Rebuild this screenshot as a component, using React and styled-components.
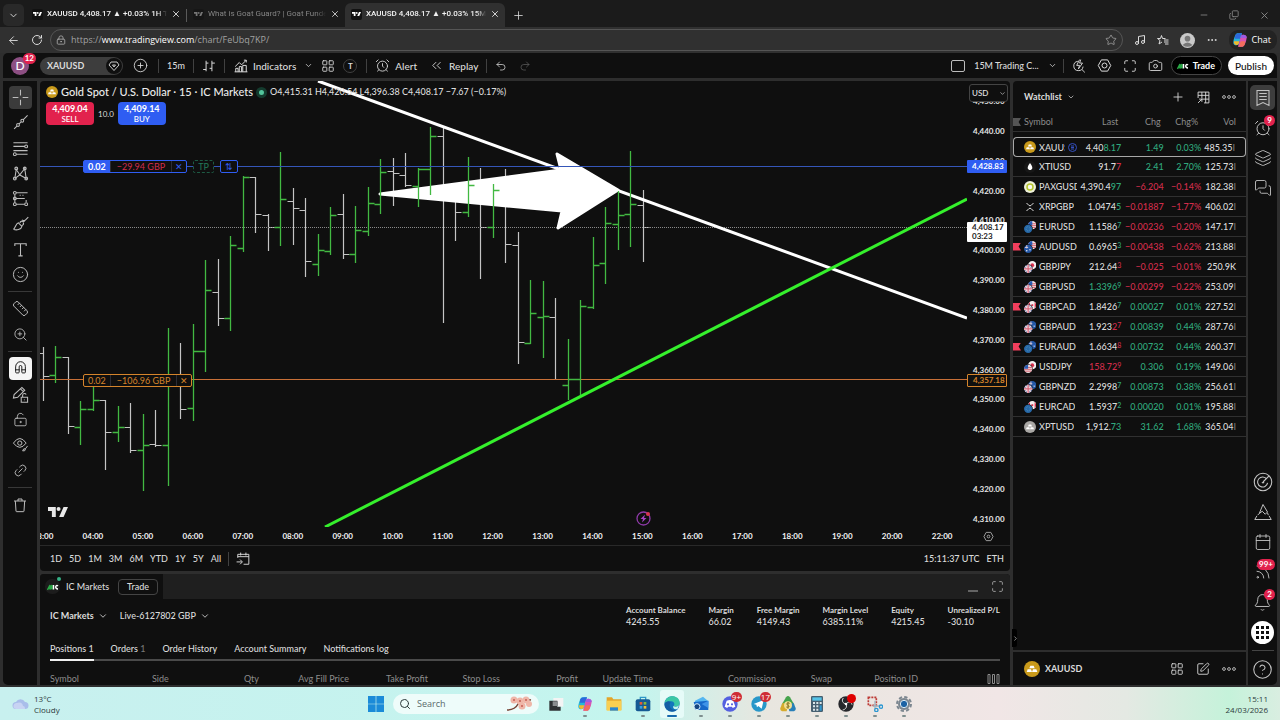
import styled, { createGlobalStyle, css } from "styled-components";
import {
  AlarmClock, ArrowLeft, Bell, Calendar, Camera, ChevronDown, ChevronRight, ChevronsLeft, CircleHelp, CirclePlus,
  Copy, Ellipsis, Eye, Layers, LayoutGrid, Link2, LockKeyholeOpen, LockKeyhole, Magnet, Maximize, MessagesSquare,
  Minus, Music, Plus, Redo2, RotateCw, Rss, Ruler, Search, Smile, SquarePen, Star, Trash2, Undo2, X, ZoomIn,
} from "lucide-react";

const UI = `"Lato", "Open Sans", sans-serif`;
const SYSTEM = `"Open Sans", "Noto Sans", sans-serif`;

const c = {
  bg: "#0f0f0f",
  frame: "#2e2e2e",
  text: "#dbdbdb",
  dim: "#8c8c8c",
  up: "#2fa87c",
  down: "#d12d4b",
  blue: "#2f5df2",
  orange: "#d5842b",
  red: "#e2224d",
};

const GlobalStyle = createGlobalStyle`
  * { box-sizing: border-box; }
  body { margin: 0; background: ${c.frame}; overflow: hidden; }
  button, input, select {
    font: inherit;
    color: inherit;
    background: none;
    border: 0;
    padding: 0;
    margin: 0;
    outline: 0;
  }
  button { cursor: pointer; white-space: nowrap; }
  svg { display: block; flex-shrink: 0; }
`;

const Page = styled.div`
  display: flex;
  flex-direction: column;
  height: 100vh;
  font-family: ${UI};
  font-size: 10px;
  line-height: 12px;
  color: ${c.text};
`;

const row = css`
  display: flex;
  align-items: center;
`;

/* browser chrome */

const TabBar = styled.div`
  ${row};
  flex: 0 0 27px;
  padding: 3px 10px 0 3px;
  background: #1b1b1b;
  font: 8px/12px "Roboto", ${SYSTEM};
`;

const TabMenu = styled.button`
  ${row};
  justify-content: center;
  width: 21px;
  height: 22px;
  margin-right: 2px;
  border-radius: 5px;
  background: #292929;
`;

const BrowserTab = styled.div`
  ${row};
  width: ${(p) => p.$width}px;
  height: 24px;
  padding: 0 5px 2px 6px;
  gap: 4px;
  border-radius: 6px 6px 0 0;
  color: ${(p) => (p.$muted ? "#858585" : "#f2f2f2")};
  background: ${(p) => (p.$active ? "#303030" : "transparent")};
  font-weight: ${(p) => (p.$muted ? 400 : 500)};
`;

const TabDivider = styled.span`
  width: 1px;
  height: 13px;
  background: #5a5a5a;
`;

const TabTitle = styled.span`
  flex: 1;
  min-width: 0;
  overflow: hidden;
  white-space: nowrap;
  mask-image: linear-gradient(to right, #000 92%, transparent);
`;

const NewTab = styled.button`
  margin: 0 auto 0 7px;
`;

const WindowControls = styled.div`
  display: flex;
  gap: 20px;
  color: #8a8a8a;
`;

const RestoreIcon = styled(Copy)`
  transform: scaleY(-1);
`;

const AddressRow = styled.div`
  ${row};
  flex: 0 0 26px;
  padding: 0 3px 0 7px;
  gap: 11px;
  background: #303030;
  font: 9px/12px ${SYSTEM};
`;

const AddressBox = styled.div`
  ${row};
  flex: 1;
  height: 22px;
  margin-left: -4px;
  padding: 0 5px;
  gap: 5px;
  border: 1px solid #555;
  border-radius: 11px;
  color: #aaa;
`;

const Url = styled.a`
  flex: 1;
  color: #a2a2a2;
  text-decoration: none;

  b { font-weight: 500; color: #fff; }
`;

const ChatButton = styled.button`
  ${row};
  gap: 4px;
  height: 20px;
  padding: 0 6px 0 3px;
  border-radius: 9px;
  background: #232323;
  color: #fff;
`;

/* application frame */

const Frame = styled.div`
  flex: 1;
  min-height: 0;
  display: flex;
  flex-direction: column;
  gap: 3px;
  padding: 0 3px 2px;
  background: ${c.frame};
`;

const Toolbar = styled.header`
  ${row};
  flex: 0 0 25px;
  padding: 0 3px 0 8px;
  border-radius: 5px 5px 0 0;
  background: ${c.bg};
  font-weight: 500;
`;

const ToolGroup = styled.div`
  ${row};
  gap: ${(p) => p.$gap || 8}px;
  padding: 0 ${(p) => p.$pad || 0}px;
`;

const Divider = styled.span`
  width: 1px;
  height: 14px;
  background: #414141;
`;

const Spacer = styled.span`
  flex: 1;
`;

const ToolButton = styled.button`
  ${row};
  gap: 5px;
  color: ${(p) => (p.$off ? "#5c5c5c" : c.text)};
  font-size: ${(p) => (p.$small ? 9 : 10)}px;
`;

const Avatar = styled.div`
  position: relative;
  width: 18px;
  height: 18px;
  margin-right: 11px;
  border-radius: 9px;
  background: #8d4f83;
  color: #fff;
  font: 500 12px/18px ${UI};
  text-align: center;
`;

const Badge = styled.span`
  position: absolute;
  top: -4px;
  right: -7px;
  min-width: 11px;
  padding: 0 2px;
  border-radius: 6px;
  background: ${c.red};
  color: #fff;
  font: 700 8px/11px ${UI};
  text-align: center;
`;

const SymbolPill = styled.button`
  ${row};
  justify-content: space-between;
  width: 83px;
  height: 18px;
  padding: 0 1px 0 7px;
  border-radius: 9px;
  background: #3d3d3d;
  font: 700 9px/12px ${UI};
`;

const PillMark = styled.span`
  ${row};
  justify-content: center;
  width: 16px;
  height: 16px;
  border-radius: 8px;
  background: #0f0f0f;
`;

const RoundLabel = styled.span`
  width: 14px;
  height: 14px;
  border: 1px solid #414141;
  border-radius: 7px;
  font: 700 8px/12px ${UI};
  text-align: center;
`;

const LayoutBox = styled.span`
  width: 14px;
  height: 12px;
  border: 1px solid #bdbdbd;
  border-radius: 2px;
`;

const TradeButton = styled.button`
  ${row};
  gap: 4px;
  height: 19px;
  margin-right: 6px;
  padding: 0 6px 0 5px;
  border: 1px solid #444;
  border-radius: 10px;
  background: #000;
  color: #fff;
  font-size: 9px;
  font-weight: 700;
`;

const PublishButton = styled.button`
  height: 19px;
  padding: 0 7px;
  border-radius: 10px;
  background: #fff;
  color: #111;
`;

const Workspace = styled.div`
  flex: 1;
  min-height: 0;
  display: flex;
  gap: 3px;
`;

const ToolColumn = styled.nav`
  flex: 0 0 34px;
  display: flex;
  flex-direction: column;
  align-items: center;
  padding-top: 4px;
  border-radius: 0 0 0 5px;
  background: ${c.bg};

  hr {
    width: 24px;
    height: 1px;
    margin: 4px 0;
    border: 0;
    background: #383838;
  }
`;

const ToolStack = styled.div`
  display: flex;
  flex-direction: column;
  justify-content: space-around;
  height: ${(p) => p.$height}px;
`;

const ToolTile = styled.button`
  ${row};
  justify-content: center;
  width: 23px;
  height: 23px;
  border-radius: 4px;
  color: ${(p) => (p.$tone === "light" ? "#111" : "#bdbdbd")};
  background: ${(p) => ({ light: "#f5f5f5", dark: "#3b3b3b" })[p.$tone] || "none"};
`;

const CenterColumn = styled.main`
  flex: 1;
  min-width: 0;
  display: flex;
  flex-direction: column;
  gap: 3px;
`;

const ChartPane = styled.section`
  flex: 1;
  min-height: 0;
  display: flex;
  flex-direction: column;
  border-radius: 4px;
  background: ${c.bg};
  overflow: hidden;
`;

const ChartBody = styled.div`
  flex: 1;
  min-height: 0;
  display: grid;
  grid-template-columns: 1fr 43px;
  grid-template-rows: 1fr 18px;
`;

const Plot = styled.div`
  position: relative;
  overflow: hidden;
`;

const PlotCanvas = styled.svg`
  position: absolute;
  inset: 0;
  width: 100%;
  height: 100%;
`;

const Legend = styled.div`
  ${row};
  position: relative;
  gap: 3px;
  height: 16px;
  margin: 3px 6px 0;
  white-space: nowrap;

  h1 { margin: 0; font: 500 11px/14px ${UI}; color: #ececec; }
`;

const StatusDot = styled.span`
  width: 11px;
  height: 11px;
  border: 3px solid #143b2e;
  border-radius: 6px;
  background: #53c59c;
`;

const Ohlc = styled.span`
  font: 500 9px/12px ${UI};
`;

const QuoteRow = styled.div`
  ${row};
  position: relative;
  gap: 4px;
  margin: 2px 6px;
  font: 8px/10px ${UI};
`;

const QuoteButton = styled.button`
  width: 48px;
  height: 23px;
  border-radius: 4px;
  background: ${(p) => p.$color};
  color: #fff;
  font: 500 8px/10px ${UI};

  b { display: block; font: 700 9px/10px ${UI}; }
`;

const OrderLine = styled.div`
  ${row};
  position: absolute;
  top: ${(p) => p.$top}%;
  left: 43px;
  gap: 6px;
  height: 13px;
  margin-top: -6px;
  font: 9px/11px ${UI};
`;

const OrderPill = styled.div`
  display: flex;
  border: 1px solid ${(p) => p.$color};
  border-radius: 2px;
  background: ${c.bg};
  color: ${(p) => p.$text};

  > * { padding: 0 6px; height: 11px; }
  > * + * { border-left: 1px solid #2c2c34; }
  > :first-child {
    padding: 0 4px;
    ${(p) => p.$filled && `background: ${p.$color}; color: #fff; font-weight: 700;`}
  }
  > :last-child { padding: 0 3px; color: ${(p) => p.$color}; }
`;

const OrderChip = styled.button`
  height: 13px;
  padding: 0 4px;
  border: 1px ${(p) => (p.$dashed ? "dashed" : "solid")} ${(p) => p.$color};
  border-radius: 2px;
  background: ${c.bg};
  color: ${(p) => p.$text || p.$color};
`;

const PlotLogo = styled.svg`
  position: absolute;
  left: 8px;
  bottom: 10px;
`;

const EventMark = styled.svg`
  position: absolute;
  left: 65%;
  bottom: 1px;
  margin-left: -7px;
`;

const PriceAxis = styled.div`
  position: relative;
  overflow: hidden;
  font: 700 8px/12px ${UI};
  color: #e6e6e6;
`;

const PriceLabels = styled.div`
  display: flex;
  flex-direction: column;
  justify-content: space-between;
  height: 100%;
  padding: 14px 6px 2px;
`;

const CurrencySelect = styled.select`
  position: absolute;
  top: 3px;
  left: 2px;
  width: 39px;
  height: 18px;
  padding: 0 2px;
  border: 1px solid #444;
  border-radius: 3px;
  background: ${c.bg};
  appearance: none;
  font: 500 8px/16px ${UI};
`;

const SelectArrow = styled(ChevronDown)`
  position: absolute;
  top: 9px;
  right: 4px;
  pointer-events: none;
`;

const PriceTag = styled.div`
  position: absolute;
  top: ${(p) => p.$top}%;
  left: 0;
  width: 40px;
  margin-top: -6px;
  padding: ${(p) => (p.$border ? 0 : 1)}px 5px;
  border: ${(p) => (p.$border ? `1px solid ${p.$border}` : 0)};
  border-radius: 1px;
  background: ${(p) => p.$bg};
  color: ${(p) => p.$color};
  line-height: ${(p) => (p.$tall ? 9 : 11)}px;
`;

const TimeAxis = styled.div`
  display: flex;
  align-items: center;
  overflow: hidden;
  font: 700 8px/12px ${UI};
  color: #f2f2f2;

  span { flex: 1; text-align: center; }
  span:first-child { margin-left: -22px; }
`;

const AxisCorner = styled.div`
  ${row};
  justify-content: center;
  color: #aaa;
`;

const RangeBar = styled.div`
  ${row};
  flex: 0 0 26px;
  gap: 7px;
  padding: 0 6px 0 10px;
  border-top: 1px solid #292929;
  font: 500 9px/12px ${UI};
`;

const TradePanel = styled.section`
  flex: 0 0 111px;
  border-radius: 4px 4px 0 0;
  background: ${c.bg};
  overflow: hidden;
`;

const PanelHead = styled.div`
  ${row};
  height: 25px;
  padding-right: 6px;
  gap: 12px;
  background: #1f1f1f;
  color: #aaa;
`;

const BrokerTab = styled.div`
  ${row};
  height: 25px;
  width: 123px;
  padding: 0 5px;
  gap: 6px;
  background: ${c.bg};
  color: ${c.text};
  font: 500 9px/12px ${UI};

  button {
    height: 16px;
    margin-left: auto;
    padding: 0 8px;
    border: 1px solid #444;
    border-radius: 4px;
  }
`;

const BrokerMark = styled.span`
  position: relative;
  ${row};
  justify-content: center;
  width: 15px;
  height: 15px;
  border-radius: 7px;
  background: #1c1c1c;
`;

const LiveDot = styled.span`
  position: absolute;
  top: -2px;
  right: -1px;
  width: 4px;
  height: 4px;
  border-radius: 2px;
  background: #35b086;
`;

const AccountRow = styled.div`
  display: flex;
  height: 36px;
  padding: 5px 10px 0;
  gap: 12px;
  font: 500 9px/12px ${UI};
`;

const AccountButton = styled.button`
  ${row};
  gap: 4px;
  height: 24px;
  font-weight: ${(p) => (p.$bold ? 700 : 500)};
`;

const Stats = styled.dl`
  display: flex;
  gap: 23px;
  margin: 0 0 0 auto;

  dt { font: 700 8px/12px ${UI}; }
  dd { margin: 0; }
`;

const PanelTabs = styled.nav`
  display: flex;
  gap: 17px;
  height: 26px;
  margin: 0 10px;
  border-bottom: 2px solid #4a4a4a;
  font: 500 9px/12px ${UI};
`;

const PanelTab = styled.button`
  height: 26px;
  padding-top: 4px;
  border-bottom: 2px solid ${(p) => (p.$active ? "#f0f0f0" : "transparent")};

  span { color: #777; }
`;

const PositionsTable = styled.table`
  width: calc(100% - 20px);
  margin: 11px 10px 0;
  border-collapse: collapse;
  table-layout: fixed;
  color: ${c.dim};
  white-space: nowrap;

  th {
    padding: 0;
    font: 400 9px/14px ${UI};
    text-align: right;
  }
  th:nth-child(-n + 2) { text-align: left; }
  th:last-child svg { margin-left: auto; }
`;

const Watchlist = styled.aside`
  position: relative;
  flex: 0 0 233px;
  display: flex;
  flex-direction: column;
  border-radius: 4px 0 0 0;
  background: ${c.bg};
`;

const WatchHead = styled.div`
  ${row};
  height: 32px;
  padding: 0 10px 0 11px;
  gap: 12px;

  h2 { ${row}; gap: 5px; margin: 0 auto 0 0; font: 700 9px/12px ${UI}; }
`;

const WatchTable = styled.table`
  width: 100%;
  border-collapse: separate;
  border-spacing: 0;
  table-layout: fixed;
  font: 500 9px/19px ${UI};
  white-space: nowrap;

  th {
    width: 19%;
    height: 19px;
    padding: 0 3px 0 0;
    border-bottom: 1px solid #303030;
    color: ${c.dim};
    font: 400 9px/18px ${UI};
    text-align: right;
  }
  th:nth-child(1) { width: 27%; }
  th:nth-child(3) { width: 18%; }
  th:nth-child(4) { width: 16%; }
  th:first-child, td:first-child { text-align: left; }
  td {
    height: 20px;
    padding: 0;
    border-bottom: 1px solid #303030;
    text-align: right;
  }
`;

const TableGap = styled.tr`
  td { height: 5px; border: 0; line-height: 0; }
`;

const WatchRow = styled.tr`
  ${(p) =>
    p.$selected &&
    css`
      td { border-top: 1px solid #a8a8a8; border-bottom-color: #a8a8a8; line-height: 17px; }
      td:first-child { border-left: 1px solid #a8a8a8; border-radius: 4px 0 0 4px; }
      td:last-child { border-right: 1px solid #a8a8a8; border-radius: 0 4px 4px 0; }
    `}
`;

const SymbolCell = styled.div`
  ${row};
  gap: 3px;

  span { overflow: hidden; max-width: ${(p) => (p.$clip ? 26 : 38)}px; }
`;

const FlagSlot = styled.i`
  flex: 0 0 ${(p) => (p.$inset ? 7 : 8)}px;
  height: 8px;
  clip-path: polygon(0 0, 100% 0, 70% 50%, 100% 100%, 0 100%);
  background: ${(p) => p.$color || "transparent"};
`;

const Num = styled.span`
  color: ${(p) => p.$color};

  small { font-size: 7px; vertical-align: 2px; line-height: 0; }
`;

const VolCell = styled.td`
  && { padding-right: 10px; }

  i { font-style: normal; color: #777; }
`;

const WatchFoot = styled.div`
  ${row};
  flex: 0 0 35px;
  margin-top: auto;
  padding: 0 10px 0 11px;
  gap: 12px;
  border-top: 2px solid ${c.frame};

  b { margin: 0 auto 0 -7px; font: 700 9px/12px ${UI}; }
`;

const CollapseHandle = styled.button`
  ${row};
  position: absolute;
  left: -1px;
  bottom: 38px;
  height: 18px;
  width: 5px;
  border-radius: 0 2px 2px 0;
  background: #000;
`;

const Rail = styled.nav`
  flex: 0 0 29px;
  display: flex;
  flex-direction: column;
  align-items: center;
  gap: 6px;
  margin-left: -1px;
  padding: 4px 0;
  border-radius: 0 0 5px 0;
  background: ${c.bg};
  color: #c4c4c4;

  hr { width: 22px; height: 1px; margin: 0; border: 0; background: #444; }
`;

const RailButton = styled.button`
  ${row};
  position: relative;
  justify-content: center;
  width: 25px;
  height: ${(p) => (p.$active ? 25 : 24)}px;
  border-radius: 5px;
  background: ${(p) => (p.$active ? "#3d3d3d" : "none")};
`;

const RailBadge = styled(Badge)`
  top: -1px;
  right: 0;
`;

const AppsButton = styled.button`
  ${row};
  justify-content: center;
  width: 23px;
  height: 23px;
  margin-top: 1px;
  border-radius: 12px;
  background: #fff;
`;

/* desktop taskbar */

const Taskbar = styled.footer`
  flex: 0 0 33px;
  display: grid;
  grid-template-columns: 1fr auto 1fr;
  align-items: center;
  padding: 0 12px;
  background: linear-gradient(to right, #c8f0ef, #c4f5ee 50%, #e8e6df 60%, #f1e6e6 78%, #e4e9e3 88%, #c5f2da 96%, #d9eee1);
  color: #2c3a3b;
  font: 8px/11px ${SYSTEM};
`;

const Weather = styled.div`
  ${row};
  gap: 5px;
`;

const TaskIcons = styled.div`
  ${row};
  gap: 5px;
`;

const TaskButton = styled.button`
  position: relative;
  ${row};
  justify-content: center;
  width: 24px;
  height: 28px;
  border-radius: 3px;
  background: ${(p) => (p.$active ? "#e6fbf8" : "none")};

  &::after {
    content: "";
    position: absolute;
    bottom: 1px;
    width: ${(p) => (p.$active ? 10 : 4)}px;
    height: 2px;
    border-radius: 1px;
    background: ${(p) => (p.$active ? "#1769ad" : p.$idle ? "transparent" : "#7f8f8f")};
  }
`;

const TaskBadge = styled(Badge)`
  top: 2px;
  right: 0;
  padding: 0 1px;
  font: 8px/10px ${SYSTEM};
  background: #cf2c35;
`;

const TaskDot = styled.span`
  position: absolute;
  top: 4px;
  right: 2px;
  width: 9px;
  height: 9px;
  border-radius: 5px;
  background: #df0000;
`;

const SearchField = styled.label`
  ${row};
  width: 146px;
  height: 20px;
  gap: 6px;
  padding: 0 6px;
  border-radius: 10px;
  background: #eefcfa;

  input { flex: 1; min-width: 0; font: 9px/14px ${SYSTEM}; }
  input::placeholder { color: #5b6b6b; opacity: 1; }
`;

const Clock = styled.time`
  justify-self: end;
  text-align: right;
`;

const TiltedMagnet = styled(Magnet)`
  transform: rotate(-45deg);
`;

const TiltedLink = styled(Link2)`
  transform: rotate(-45deg);
`;

const Glyph = ({ d, size = 16, box = 24, width = 1.4 }) => (
  <svg width={size} height={size} viewBox={`0 0 ${box} ${box}`} fill="none" stroke="currentColor" strokeWidth={width}>
    <path d={d} />
  </svg>
);

const TvLogo = ({ w = 9, color = "#fff" }) => (
  <svg width={w} height={w / 2} viewBox="0 0 36 18" fill={color}>
    <path d="M0 0h14v18H7V7H0zM28 0h8l-8 18h-8z" />
    <circle cx="19" cy="3.6" r="3.6" />
  </svg>
);

const TabIcon = styled.span`
  ${row};
  justify-content: center;
  width: 11px;
  height: 11px;
  border-radius: 2px;
  background: #111;
  opacity: ${(p) => (p.$muted ? 0.4 : 1)};
`;

const IcMark = () => (
  <svg width="12" height="8" viewBox="0 0 24 16" fill="none" strokeWidth="3">
    <path d="M1 14L6 4v9l4-9v9" stroke="#29a745" />
    <path d="M13 4v9M22 6c-5-4-7 6 0 6" stroke="#fff" />
  </svg>
);

const GoldIcon = ({ size = 12, color = "#c99a1b" }) => (
  <svg width={size} height={size} viewBox="0 0 24 24">
    <circle cx="12" cy="12" r="12" fill={color} />
    <path d="M9.5 7h5l1.5 4H8zM5.5 12.5h5l1.5 4H4zM13.5 12.5h5l1.5 4h-8z" fill="#fff" />
  </svg>
);

const flags = {
  EUR: (
    <>
      <circle cx="9" cy="9" r="9" fill="#2668a8" />
      <circle cx="9" cy="9" r="4.5" fill="none" stroke="#6ea2b8" strokeWidth="1.5" strokeDasharray="1.5 2" />
    </>
  ),
  USD: (
    <>
      <circle cx="9" cy="9" r="9" fill="#f1dfe1" />
      <path d="M1 6h17M0 10h18M2 14h14" stroke="#d35a68" strokeWidth="2" />
      <path d="M0 9a9 9 0 0 1 9-9v9z" fill="#2a5db5" />
    </>
  ),
  GBP: (
    <>
      <circle cx="9" cy="9" r="9" fill="#7183b3" />
      <path d="M3 3l12 12M15 3L3 15" stroke="#efd9dc" strokeWidth="3" />
      <path d="M9 0v18M0 9h18" stroke="#efcdd3" strokeWidth="5" />
      <path d="M9 0v18M0 9h18" stroke="#d4566b" strokeWidth="2" />
    </>
  ),
  AUD: (
    <>
      <circle cx="9" cy="9" r="9" fill="#2457a6" />
      <path d="M2 6h7M6 1v7" stroke="#e4cdd6" strokeWidth="2" />
      <circle cx="13" cy="11" r="1.5" fill="#fff" />
      <circle cx="6" cy="13" r="1.5" fill="#fff" />
    </>
  ),
  JPY: (
    <>
      <circle cx="9" cy="9" r="9" fill="#f3eeee" />
      <circle cx="9" cy="9" r="4" fill="#d9304c" />
    </>
  ),
  CAD: (
    <>
      <circle cx="9" cy="9" r="9" fill="#f3eeee" />
      <path d="M4 2a9 9 0 0 0 0 14zM14 2a9 9 0 0 1 0 14zM7 7h4v4H7z" fill="#d9304c" />
    </>
  ),
};
flags.NZD = flags.AUD;

const SymbolIcon = ({ name }) => {
  if (name === "XAUUSD") return <GoldIcon />;
  if (name === "XPTUSD") return <GoldIcon color="#a9a7a4" />;
  if (name === "XTIUSD")
    return (
      <svg width="12" height="12" viewBox="0 0 24 24">
        <circle cx="12" cy="12" r="12" fill="#171717" />
        <path d="M12 4c8 10 4 14 0 14s-8-4 0-14" fill="#fff" />
      </svg>
    );
  if (name === "PAXGUSD")
    return (
      <svg width="12" height="12" viewBox="0 0 24 24">
        <circle cx="12" cy="12" r="12" fill="#eef0d8" />
        <circle cx="12" cy="12" r="6" fill="#f8f8ef" stroke="#b5c52e" strokeWidth="3" />
      </svg>
    );
  if (name === "XRPGBP")
    return (
      <svg width="12" height="12" viewBox="0 0 24 24" fill="none" stroke="#ddd" strokeWidth="2">
        <path d="M5 4l4.5 4.5q2.5 2.5 5 0L19 4M5 20l4.5-4.5q2.5-2.5 5 0L19 20" />
      </svg>
    );
  return (
    <svg width="12" height="12" viewBox="0 0 26 26">
      <g transform="translate(9)">{flags[name.slice(3)]}</g>
      <circle cx="9" cy="17" r="10" fill={c.bg} />
      <g transform="translate(0 8)">{flags[name.slice(0, 3)]}</g>
    </svg>
  );
};

/* high, low, open, close as distances below the top of the plot; u = rising bar */
const BARS = [
  [266, 320, 272, 295], [265, 302, 294, 276, "u"], [276, 353, 276, 345], [320, 364, 346, 328, "u"],
  [296, 330, 328, 319, "u"], [319, 389, 319, 351], [325, 361, 351, 346, "u"], [322, 372, 346, 369],
  [333, 410, 369, 364, "u"], [329, 366, 363, 364], [247, 405, 364, 298, "u"], [262, 338, 299, 328],
  [243, 340, 327, 270, "u"], [179, 291, 270, 209, "u"], [178, 245, 211, 237], [155, 250, 237, 164, "u"],
  [95, 171, 167, 96, "u"], [96, 152, 96, 133], [133, 170, 134, 146], [71, 165, 146, 118, "u"],
  [107, 164, 120, 127], [117, 196, 129, 180], [153, 195, 183, 169, "u"], [126, 174, 170, 134, "u"],
  [113, 178, 133, 173], [125, 182, 173, 149, "u"], [106, 155, 150, 122, "u"], [78, 133, 123, 91, "u"],
  [77, 125, 90, 92], [72, 106, 94, 104], [87, 126, 105, 88, "u"], [46, 114, 88, 55, "u"],
  [46, 242, 55, 104], [110, 160, 112, 131], [76, 136, 131, 104, "u"], [87, 198, 104, 146],
  [103, 157, 146, 109, "u"], [88, 182, 109, 163], [151, 283, 164, 261], [199, 263, 262, 232, "u"],
  [200, 277, 236, 235, "u"], [217, 299, 236, 298], [258, 319, 304, 298, "u"], [219, 314, 298, 225, "u"],
  [156, 228, 226, 184, "u"], [126, 203, 182, 142, "u"], [110, 169, 143, 134, "u"], [70, 166, 133, 123, "u"],
  [109, 181, 124, 146],
].map(([high, low, open, close, up], i) => ({ x: Math.round(3 + i * 12.49) + 0.5, high, low, open, close, up }));

const barPath = (bars) =>
  bars.map((b) => `M${b.x} ${b.high}V${b.low}M${b.x - 6} ${b.open + 0.5}H${b.x}M${b.x} ${b.close + 0.5}h6`).join("");

const Chart = () => (
  <PlotCanvas viewBox="0 0 927 446" preserveAspectRatio="none" fill="none">
    <path d={barPath(BARS.filter((b) => !b.up))} stroke="#c4c4c4" strokeWidth="1.2" />
    <path d="M0 298.5H927" stroke="#c87038" strokeWidth="1.2" />
    <path d="M0 146.5H927" stroke="#8a8a8a" strokeDasharray="1 1" />
    <path d="M278 0L927 237" stroke="#fff" strokeWidth="3" />
    <path d="M285 446L927 118" stroke="#35f02c" strokeWidth="3" />
    <path d="M340 113L521 89L517 73L578 109L518 147L522 130Z" fill="#fff" stroke="#fff" strokeWidth="3" strokeLinejoin="round" />
    <path d={barPath(BARS.filter((b) => b.up))} stroke="#42b942" strokeWidth="1.3" />
    <path d="M0 85.5H927" stroke="#3556b8" />
  </PlotCanvas>
);

const drawTools = [
  "M12 1v8M12 15v8M1 12h8M15 12h8",
  "M3 21l4-4M10 14l3-3M16 8l6-6M8.5 15.5m-2 0a2 2 0 1 0 4 0a2 2 0 1 0-4 0M14.5 9.5m-2 0a2 2 0 1 0 4 0a2 2 0 1 0-4 0",
  "M2 4h20M2 9h16M2 15h20M6 20h16M20 9m-2 0a2 2 0 1 0 4 0a2 2 0 1 0-4 0M4 20m-2 0a2 2 0 1 0 4 0a2 2 0 1 0-4 0",
  "M4 19L6 6l5 8 7-9 2 14-9-5-7 5M4 19m-2 0a2 2 0 1 0 4 0a2 2 0 1 0-4 0M6 5m-2 0a2 2 0 1 0 4 0a2 2 0 1 0-4 0M18 5m-2 0a2 2 0 1 0 4 0a2 2 0 1 0-4 0M20 19m-2 0a2 2 0 1 0 4 0a2 2 0 1 0-4 0",
  "M6 4h16M6 12h12M6 20h12M4 4m-2 0a2 2 0 1 0 4 0a2 2 0 1 0-4 0M4 12m-2 0a2 2 0 1 0 4 0a2 2 0 1 0-4 0M4 20m-2 0a2 2 0 1 0 4 0a2 2 0 1 0-4 0M20 20m-2 0a2 2 0 1 0 4 0a2 2 0 1 0-4 0M4 6v12M11 8l1-1M15 8l1-1M20 14v3",
  "M2 20c3-1 3-8 7-9l5 5c-1 5-8 6-12 4M11 11c1-2 3-3 5-1M14 15c2-1 3-2 2-4M16 10l7-7M14 7c1 1 3 1 5 0",
  "M4 7V4h16v3M12 4v17M9 21h6",
];

/* no 21:00 tick, the market is closed for that hour */
const hours = [3, 4, 5, 6, 7, 8, 9, 10, 11, 12, 13, 14, 15, 16, 17, 18, 19, 20, 22];
const timeLabels = hours.map((h) => `${String(h).padStart(2, "0")}:00`);
const priceLabels = Array.from({ length: 15 }, (_, i) => `4,${450 - i * 10}.00`);

/* name, steady digits, live digits, live tone, trailing digit, change, percent, volume, unit */
const symbols = [
  ["XAUUSD", "4,40", "8.17", "up", "", "1.49", "0.03%", "485.35"],
  ["XTIUSD", "91.7", "7", "down", "", "2.41", "2.70%", "125.73"],
  ["PAXGUSD", "4,390.4", "97", "up", "", "−6.204", "−0.14%", "182.38"],
  ["XRPGBP", "1.0474", "5", "up", "", "−0.01887", "−1.77%", "406.02"],
  ["EURUSD", "1.1586", "", "up", "7", "−0.00236", "−0.20%", "147.17"],
  ["AUDUSD", "0.6965", "", "up", "3", "−0.00438", "−0.62%", "213.88"],
  ["GBPJPY", "212.64", "", "down", "3", "−0.025", "−0.01%", "250.9", "K"],
  ["GBPUSD", "", "1.3396", "up", "9", "−0.00299", "−0.22%", "253.09"],
  ["GBPCAD", "1.8426", "", "up", "7", "0.00027", "0.01%", "227.52"],
  ["GBPAUD", "1.923", "2", "down", "7", "0.00839", "0.44%", "287.76"],
  ["EURAUD", "1.6634", "", "down", "8", "0.00732", "0.44%", "260.37"],
  ["USDJPY", "", "158.72", "down", "9", "0.306", "0.19%", "149.06"],
  ["GBPNZD", "2.2998", "", "up", "7", "0.00873", "0.38%", "256.61"],
  ["EURCAD", "1.5937", "", "up", "2", "0.00020", "0.01%", "195.88"],
  ["XPTUSD", "1,912.", "73", "up", "", "31.62", "1.68%", "365.04"],
];
const flagged = ["AUDUSD", "GBPCAD", "EURAUD"];

const stats = [
  ["Account Balance", "4245.55"],
  ["Margin", "66.02"],
  ["Free Margin", "4149.43"],
  ["Margin Level", "6385.11%"],
  ["Equity", "4215.45"],
  ["Unrealized P/L", "-30.10"],
];

const positionColumns = [
  ["Symbol", 102], ["Side", 47], ["Qty", 60], ["Avg Fill Price", 90], ["Take Profit", 79], ["Stop Loss", 72],
  ["Profit", 78], ["Update Time", 75], ["Commission", 123], ["Swap", 56], ["Position ID", 86],
];

const CopilotIcon = ({ size = 16 }) => (
  <svg width={size} height={size} viewBox="0 0 24 24">
    <path d="M8 2h7l-4 15c-1 4-9 4-9-1C2 12 5 2 8 2" fill="#25b7d8" />
    <path d="M5 5c1-3 5-3 10-3l-3 8H4z" fill="#2d69dc" />
    <path d="M3 14h8l-1 4c-2 3-8 2-7-4" fill="#f0b92d" />
    <path d="M16 22H9l4-15c1-4 9-4 9 1 0 4-3 14-6 14" fill="#d653b5" />
    <path d="M19 19c-2 4-5 3-9 3l3-8h7z" fill="#f36d5c" />
    <path d="M14 5c3-2 8 0 8 4h-9z" fill="#9d5be2" />
  </svg>
);

const TaskArt = {
  windows: <path d="M0 0h11.5v11.5H0zM12.5 0H24v11.5H12.5zM0 12.5h11.5V24H0zM12.5 12.5H24V24H12.5z" fill="#1b8bd8" />,
  desk: (
    <>
      <path d="M8 3h15v13H8z" fill="#f4f4f4" />
      <path d="M2 7h12v9h5v6H2z" fill="#2f3234" />
      <path d="M7 8h8v7H7z" fill="#8a8d8f" />
    </>
  ),
  folder: (
    <>
      <path d="M1 2h8l2 3h12v16H1z" fill="#e3a52a" />
      <path d="M1 7h22v15H1z" fill="#f9cf52" />
      <path d="M6 17h12v5H6z" fill="#2b87cf" />
    </>
  ),
  store: (
    <>
      <path d="M8 6V2h8v4" fill="none" stroke="#2e98c8" strokeWidth="2" />
      <rect x="1" y="5" width="22" height="18" rx="3" fill="#155a94" />
      <path d="M7 9h4v4H7z" fill="#e65b38" />
      <path d="M13 9h4v4h-4z" fill="#81b83d" />
      <path d="M7 15h4v4H7z" fill="#39a3dd" />
      <path d="M13 15h4v4h-4z" fill="#f3be35" />
    </>
  ),
  edge: (
    <>
      <circle cx="12" cy="12" r="11.5" fill="#1476bd" />
      <path d="M1 11C2-3 23-3 23.5 10c0 6-7 7-9 5 3-4-1-8-5-7-4 0-8 2-8.5 3" fill="#3cc7a5" />
      <path d="M10 9c-4 5 0 13 9 12-9 6-19-1-18-9 1-4 6-5 9-3" fill="#155da4" />
      <path d="M14 15c3 2 8 1 9.5-3l-3 7c-4 2-8 0-6.5-4" fill="#c9f5ee" />
    </>
  ),
  wallet: (
    <>
      <path d="M3 7l12-6 8 7v6H3z" fill="#55b7f0" />
      <path d="M1 9l22-2v14H4z" fill="#1769c9" />
      <path d="M13 12l10-5v11z" fill="#3f94e8" />
      <circle cx="6" cy="16" r="4.5" fill="#164580" stroke="#cfeaff" strokeWidth="1.5" />
    </>
  ),
  discord: (
    <>
      <circle cx="12" cy="12" r="11.5" fill="#5460e0" />
      <path d="M7 7q5-2 10 0l3 9-4 2-1-2H9l-1 2-4-2z" fill="#fff" />
      <circle cx="9" cy="12.5" r="1.6" fill="#5460e0" />
      <circle cx="15" cy="12.5" r="1.6" fill="#5460e0" />
    </>
  ),
  telegram: (
    <>
      <circle cx="12" cy="12" r="11.5" fill="#2897c9" />
      <path d="M4 12l15-6-3 13-5-4-2 2-1-4z" fill="#fff" />
    </>
  ),
  trader: (
    <>
      <path d="M9 2q3-4 6 0l7 12-10 2-10-2z" fill="#45a34c" />
      <path d="M4 10l8 4-2 9H3q-4-2-2-6z" fill="#d6ab2d" />
      <path d="M20 10l-8 4 2 9h7q4-2 2-6z" fill="#2980b9" />
      <circle cx="12" cy="14" r="6" fill="#f3df91" />
      <path d="M14.5 11c-5-2-5 2-2.5 3s2 4-2.5 2.5M12 9v10" stroke="#837221" fill="none" strokeWidth="1.5" />
    </>
  ),
  calc: (
    <>
      <rect x="3" y="0" width="18" height="24" rx="2" fill="#465f70" />
      <path d="M5 2h14v5H5z" fill="#55c3e8" />
      <path d="M6 9h3v3H6zM11 9h3v3h-3zM6 14h3v3H6zM11 14h3v3h-3zM6 19h3v3H6zM11 19h3v3h-3zM16 9h3v3h-3z" fill="#dce7eb" />
      <path d="M16 14h3v8h-3z" fill="#2e9bd5" />
    </>
  ),
  obs: (
    <>
      <circle cx="12" cy="12" r="11.5" fill="#26272b" />
      <path d="M12 12c-5-1-7-5-4-9M12 12c3-4 8-4 9 1M12 12c2 4 0 8-5 9" stroke="#ddd" strokeWidth="1.5" fill="none" />
      <circle cx="12" cy="12" r="2" fill="#fff" />
    </>
  ),
  snip: (
    <>
      <path d="M2 2h12v12H2z" fill="none" stroke="#bd3b36" strokeWidth="2.5" strokeDasharray="3 1.5" />
      <path d="M12 7v12M9 15h11" stroke="#9eb2bd" strokeWidth="2" />
      <circle cx="21" cy="16" r="2.5" fill="none" stroke="#2b97d2" strokeWidth="2" />
      <circle cx="14" cy="21" r="2.5" fill="none" stroke="#2b97d2" strokeWidth="2" />
    </>
  ),
  gear: (
    <>
      <circle cx="12" cy="12" r="9" fill="#7c8790" />
      <circle cx="12" cy="12" r="10.5" fill="none" stroke="#7c8790" strokeWidth="3" strokeDasharray="5 3.25" />
      <circle cx="12" cy="12" r="5.5" fill="#1b63a5" stroke="#dceaf2" strokeWidth="1.5" />
    </>
  ),
};

const Task = ({ art, badge, dot, ...props }) => (
  <TaskButton aria-label={art} {...props}>
    {art === "copilot" ? (
      <CopilotIcon />
    ) : (
      <svg width="16" height="16" viewBox="0 0 24 24">{TaskArt[art]}</svg>
    )}
    {badge && <TaskBadge>{badge}</TaskBadge>}
    {dot && <TaskDot />}
  </TaskButton>
);

const icon = { size: 15, strokeWidth: 1.4 };

const Dots = () => (
  <svg width="14" height="4" viewBox="0 0 14 4" fill="none" stroke="currentColor" strokeWidth=".8">
    <circle cx="2" cy="2" r="1.4" />
    <circle cx="7" cy="2" r="1.4" />
    <circle cx="12" cy="2" r="1.4" />
  </svg>
);

function BrowserChrome() {
  return (
    <>
      <TabBar>
        <TabMenu aria-label="Tab list"><ChevronDown size={11} strokeWidth={2} /></TabMenu>
        <BrowserTab $width={160}>
          <TabIcon><TvLogo /></TabIcon>
          <TabTitle>XAUUSD 4,408.17 ▲ +0.03% 1H Tr</TabTitle>
          <X size={10} />
        </BrowserTab>
        <TabDivider />
        <BrowserTab $width={158} $muted>
          <TabIcon $muted><TvLogo /></TabIcon>
          <TabTitle>What is Goat Guard? | Goat Funde</TabTitle>
          <X size={10} color="#ddd" />
        </BrowserTab>
        <BrowserTab $width={160} $active>
          <TabIcon><TvLogo /></TabIcon>
          <TabTitle>XAUUSD 4,408.17 ▲ +0.03% 15M</TabTitle>
          <X size={10} />
        </BrowserTab>
        <NewTab aria-label="New tab"><Plus size={13} strokeWidth={1.5} /></NewTab>
        <WindowControls>
          <Minus size={10} />
          <RestoreIcon size={10} />
          <X size={11} />
        </WindowControls>
      </TabBar>
      <AddressRow>
        <ArrowLeft size={13} strokeWidth={1.7} />
        <RotateCw size={12} strokeWidth={2} />
        <AddressBox>
          <LockKeyhole size={10} />
          <Url href="https://www.tradingview.com/chart/FeUbq7KP/">
            https://<b>www.tradingview.com</b>/chart/FeUbq7KP/
          </Url>
          <Star size={12} strokeWidth={1.5} />
        </AddressBox>
        <Music size={12} />
        <Glyph size={12} width={2} d="M9 3l2 6h6M9 3L7 9H1l5 4-2 7 6-4M14 12h9M14 16h9M16 20h7" />
        <svg width="15" height="15" viewBox="0 0 24 24">
          <circle cx="12" cy="12" r="12" fill="#c9c9c9" />
          <circle cx="12" cy="9" r="4.5" fill="#777" />
          <path d="M4 19q8-8 16 0q-8 6-16 0" fill="#777" />
        </svg>
        <Ellipsis size={12} />
        <ChatButton><CopilotIcon />Chat</ChatButton>
      </AddressRow>
    </>
  );
}

function TopToolbar() {
  return (
    <Toolbar>
      <Avatar>D<Badge>12</Badge></Avatar>
      <SymbolPill>
        XAUUSD
        <PillMark><Glyph size={12} width={1.8} d="M6 4h12l4 6-10 11L2 10zM9 10h6l-3 4z" /></PillMark>
      </SymbolPill>
      <ToolGroup $pad={10}><ToolButton aria-label="Compare"><CirclePlus {...icon} /></ToolButton></ToolGroup>
      <Divider />
      <ToolGroup $pad={8}><ToolButton $small>15m</ToolButton></ToolGroup>
      <Divider />
      <ToolGroup $pad={8}>
        <ToolButton aria-label="Bar style"><Glyph size={14} width={1.7} d="M7 3v18M2 18h5M7 7h4M17 3v18M13 16h4M17 7h5" /></ToolButton>
      </ToolGroup>
      <Divider />
      <ToolGroup $gap={8} $pad={9}>
        <ToolButton>
          <Glyph size={14} width={1.7} d="M2 13l7-7 4 4 8-8M17 2h4v4M3 22v-6h4v6M9 22v-9h4v9M15 22V11h6v11M1 22h22" />
          Indicators
        </ToolButton>
        <ChevronDown size={9} />
        <LayoutGrid size={14} strokeWidth={1.5} />
        <RoundLabel>T</RoundLabel>
      </ToolGroup>
      <Divider />
      <ToolGroup $gap={12} $pad={8}>
        <ToolButton><AlarmClock {...icon} />Alert</ToolButton>
        <ToolButton><ChevronsLeft {...icon} />Replay</ToolButton>
      </ToolGroup>
      <Divider />
      <ToolGroup $gap={12} $pad={8}>
        <ToolButton aria-label="Undo"><Undo2 size={12} strokeWidth={1.5} /></ToolButton>
        <ToolButton aria-label="Redo" $off><Redo2 size={12} strokeWidth={1.5} /></ToolButton>
      </ToolGroup>
      <Spacer />
      <ToolGroup $gap={9} $pad={6}>
        <LayoutBox />
        <ToolButton $small>15M Trading C...</ToolButton>
        <ChevronDown size={9} />
      </ToolGroup>
      <Divider />
      <ToolGroup $gap={11} $pad={8}>
        <Glyph size={14} width={1.6} d="M10 4a8 8 0 1 0 9 9M17 18l5 5M13 1l-5 10h5l-2 6 7-10h-5l2-6" />
        <Glyph size={15} width={1.6} d="M7 3h10l5 9-5 9H7l-5-9zM12 12m-4 0a4 4 0 1 0 8 0a4 4 0 1 0-8 0" />
        <Maximize size={14} strokeWidth={1.5} />
        <Camera size={15} strokeWidth={1.4} />
      </ToolGroup>
      <TradeButton><IcMark />Trade</TradeButton>
      <PublishButton>Publish</PublishButton>
    </Toolbar>
  );
}

function DrawingTools() {
  return (
    <ToolColumn>
      <ToolStack $height={202}>
        {drawTools.map((d, i) => (
          <ToolTile key={d} $tone={i === 0 ? "dark" : undefined}><Glyph d={d} size={17} width={1.5} /></ToolTile>
        ))}
        <ToolTile><Smile size={17} strokeWidth={1.4} /></ToolTile>
      </ToolStack>
      <hr />
      <ToolStack $height={51}>
        <ToolTile><Ruler size={17} strokeWidth={1.4} /></ToolTile>
        <ToolTile><ZoomIn {...icon} /></ToolTile>
      </ToolStack>
      <hr />
      <ToolStack $height={127}>
        <ToolTile $tone="light"><TiltedMagnet {...icon} /></ToolTile>
        <ToolTile>
          <Glyph size={17} width={1.5} d="M2 17L3 12 14 2l4 4L8 16zM12 4l4 4M13 16h9v7h-9zM15 16v-3c0-3 4-3 5-1M17.5 19v1" />
        </ToolTile>
        <ToolTile><LockKeyholeOpen {...icon} /></ToolTile>
        <ToolTile><Glyph size={17} width={1.4} d="M2 10q9-13 18 0q-9 12-18 0M11 10m-3 0a3 3 0 1 0 6 0a3 3 0 1 0-6 0M15 21q1-4 4-3l3-4M19 18q0 4-4 3" /></ToolTile>
        <ToolTile><TiltedLink {...icon} /></ToolTile>
      </ToolStack>
      <hr />
      <ToolStack $height={26}>
        <ToolTile><Glyph size={16} width={1.5} d="M3 6h18M9 6V3h6v3M5 6l1 15q0 1 1 1h10q1 0 1-1l1-15" /></ToolTile>
      </ToolStack>
    </ToolColumn>
  );
}

function ChartSection() {
  return (
    <ChartPane>
      <ChartBody>
        <Plot>
          <Chart />
          <Legend>
            <GoldIcon />
            <h1>Gold Spot / U.S. Dollar · 15 · IC Markets</h1>
            <StatusDot />
            <Ohlc>O4,415.31 H4,420.54 L4,396.38 C4,408.17 −7.67 (−0.17%)</Ohlc>
          </Legend>
          <QuoteRow>
            <QuoteButton $color={c.red}><b>4,409.04</b>SELL</QuoteButton>
            10.0
            <QuoteButton $color={c.blue}><b>4,409.14</b>BUY</QuoteButton>
          </QuoteRow>
          <OrderLine $top={19}>
            <OrderPill $color={c.blue} $text={c.down} $filled>
              <span>0.02</span><span>−29.94 GBP</span><span>✕</span>
            </OrderPill>
            <OrderChip $color="#1d5a43" $text="#237a58" $dashed>TP</OrderChip>
            <OrderChip $color={c.blue}>⇅</OrderChip>
          </OrderLine>
          <OrderLine $top={67}>
            <OrderPill $color={c.orange} $text={c.orange}>
              <span>0.02</span><span>−106.96 GBP</span><span>✕</span>
            </OrderPill>
          </OrderLine>
          <PlotLogo width="20" height="10" viewBox="0 0 36 18" fill="#e8e8e8">
            <path d="M0 0h14v18H7V7H0zM28 0h8l-8 18h-8z" />
            <circle cx="19" cy="3.6" r="3.6" />
          </PlotLogo>
          <EventMark width="15" height="15" viewBox="0 0 15 15" fill="none">
            <circle cx="7.5" cy="7.5" r="6.5" stroke="#8e3aa8" strokeWidth="1.3" />
            <path d="M9 3.5L4.5 8H7L6 11.5 10.5 7H8z" fill="#a643c4" />
            <circle cx="12" cy="3" r="2" fill="#d8344f" />
          </EventMark>
        </Plot>
        <PriceAxis>
          <PriceLabels>{priceLabels.map((p) => <span key={p}>{p}</span>)}</PriceLabels>
          <CurrencySelect aria-label="Currency" defaultValue="USD"><option>USD</option></CurrencySelect>
          <SelectArrow size={7} />
          <PriceTag $top={19} $bg={c.blue} $color="#fff">4,428.83</PriceTag>
          <PriceTag $top={33} $bg="#fff" $color="#222" $tall>4,408.17<br />03:23</PriceTag>
          <PriceTag $top={67} $bg={c.bg} $color={c.orange} $border={c.orange}>4,357.18</PriceTag>
        </PriceAxis>
        <TimeAxis>{timeLabels.map((t) => <span key={t}>{t}</span>)}</TimeAxis>
        <AxisCorner><Glyph size={11} width={2} d="M7 3h10l5 9-5 9H7l-5-9zM12 12m-3 0a3 3 0 1 0 6 0a3 3 0 1 0-6 0" /></AxisCorner>
      </ChartBody>
      <RangeBar>
        {["1D", "5D", "1M", "3M", "6M", "YTD", "1Y", "5Y", "All"].map((r) => <button key={r}>{r}</button>)}
        <Divider />
        <Glyph size={14} width={1.6} d="M3 10V4h19v17H13M3 8h19M8 1v5M17 1v5M1 17h9M7 13l4 4-4 4" />
        <Spacer />
        <span>15:11:37 UTC</span>
        <span>ETH</span>
      </RangeBar>
    </ChartPane>
  );
}

function AccountPanel() {
  return (
    <TradePanel>
      <PanelHead>
        <BrokerTab>
          <BrokerMark><IcMark /><LiveDot /></BrokerMark>
          IC Markets
          <button>Trade</button>
        </BrokerTab>
        <Spacer />
        <Glyph size={12} width={2} d="M2 20h20" />
        <Maximize size={13} strokeWidth={1.6} />
      </PanelHead>
      <AccountRow>
        <AccountButton $bold>IC Markets<ChevronDown size={10} /></AccountButton>
        <AccountButton>Live-6127802 GBP<ChevronDown size={10} /></AccountButton>
        <Stats>
          {stats.map(([k, v]) => <div key={k}><dt>{k}</dt><dd>{v}</dd></div>)}
        </Stats>
      </AccountRow>
      <PanelTabs>
        <PanelTab $active>Positions 1</PanelTab>
        <PanelTab>Orders <span>1</span></PanelTab>
        <PanelTab>Order History</PanelTab>
        <PanelTab>Account Summary</PanelTab>
        <PanelTab>Notifications log</PanelTab>
      </PanelTabs>
      <PositionsTable>
        <colgroup>
          {positionColumns.map(([name, w]) => <col key={name} style={{ width: `${w / 9.5}%` }} />)}
          <col />
        </colgroup>
        <thead>
          <tr>
            {positionColumns.map(([name]) => <th key={name}>{name}</th>)}
            <th aria-label="Columns">
              <svg width="13" height="10" viewBox="0 0 13 10" fill="none" stroke="currentColor">
                <path d="M1 .5h2v9H1zM5.5 .5h2v9h-2zM10 .5h2v9h-2z" />
              </svg>
            </th>
          </tr>
        </thead>
      </PositionsTable>
    </TradePanel>
  );
}

function WatchlistPanel() {
  return (
    <Watchlist>
      <WatchHead>
        <h2>Watchlist <ChevronDown size={8} /></h2>
        <Plus size={14} strokeWidth={1.5} />
        <Glyph size={13} width={1.7} d="M2 13V2h20v20h-9M2 8h20M9 2v12M16 2v20M9 15h13M2 22l7-7M4 15h5v5" />
        <Dots />
      </WatchHead>
      <WatchTable>
        <thead>
          <tr>
            <th><SymbolCell><FlagSlot $color="#555" />Symbol</SymbolCell></th>
            <th>Last</th>
            <th>Chg</th>
            <th>Chg%</th>
            <VolCell as="th">Vol</VolCell>
          </tr>
        </thead>
        <tbody>
          <TableGap><td colSpan="5" /></TableGap>
          {symbols.map(([name, steady, live, tone, last, chg, pct, vol, unit], i) => {
            const color = chg.startsWith("−") ? c.down : c.up;
            return (
              <WatchRow key={name} $selected={i === 0}>
                <td>
                  <SymbolCell $clip={i === 0}>
                    <FlagSlot $inset={i === 0} $color={flagged.includes(name) ? "#f23f5d" : undefined} />
                    <SymbolIcon name={name} />
                    <span>{name}</span>
                    {i === 0 && (
                      <svg width="9" height="9" viewBox="0 0 9 9" fill="none" stroke="#3450c0">
                        <circle cx="4.5" cy="4.5" r="4" />
                        <path d="M3 3h3M3 4.5h3M3 6h3" />
                      </svg>
                    )}
                  </SymbolCell>
                </td>
                <td>{steady}<Num $color={c[tone]}>{live}{last && <small>{last}</small>}</Num></td>
                <td><Num $color={color}>{chg}</Num></td>
                <td><Num $color={color}>{pct}</Num></td>
                <VolCell>{vol}{unit || <i>I</i>}</VolCell>
              </WatchRow>
            );
          })}
        </tbody>
      </WatchTable>
      <WatchFoot>
        <GoldIcon size={16} />
        <b>XAUUSD</b>
        <LayoutGrid size={14} strokeWidth={1.5} />
        <SquarePen size={14} strokeWidth={1.5} />
        <Dots />
      </WatchFoot>
      <CollapseHandle aria-label="Collapse"><ChevronRight size={7} /></CollapseHandle>
    </Watchlist>
  );
}

function RightRail() {
  return (
    <Rail>
      <RailButton $active><Glyph size={18} width={1.4} d="M4 2h16v20l-8-4-8 4zM7 6h10M7 10h10M7 14h10" /></RailButton>
      <RailButton><AlarmClock size={18} strokeWidth={1.3} /><RailBadge>9</RailBadge></RailButton>
      <RailButton><Layers size={18} strokeWidth={1.2} /></RailButton>
      <RailButton><MessagesSquare size={18} strokeWidth={1.2} /></RailButton>
      <Spacer />
      <RailButton><Glyph size={20} width={1.3} d="M12 12m-10.5 0a10.5 10.5 0 1 0 21 0a10.5 10.5 0 1 0-21 0M16.5 8.5A6 6 0 1 0 17.5 13M12 12l7-7M12 12m-1 0a1 1 0 1 0 2 0" /></RailButton>
      <RailButton><Glyph size={18} width={1.3} d="M12 2l6 10-3 3-4-4-4 3zM4 17l-3 5h22l-3-5M5 16l2-2M19 16l-1-3" /></RailButton>
      <RailButton><Calendar size={18} strokeWidth={1.2} /></RailButton>
      <RailButton><Rss size={18} strokeWidth={1.2} /><RailBadge>99+</RailBadge></RailButton>
      <RailButton><Bell size={19} strokeWidth={1.2} /><RailBadge>2</RailBadge></RailButton>
      <AppsButton aria-label="Apps">
        <svg width="13" height="13" viewBox="0 0 13 13" fill="#111">
          <path d="M0 0h3v3H0zM5 0h3v3H5zM10 0h3v3h-3zM0 5h3v3H0zM5 5h3v3H5zM10 5h3v3h-3zM0 10h3v3H0zM5 10h3v3H5zM10 10h3v3h-3z" />
        </svg>
      </AppsButton>
      <hr />
      <RailButton><CircleHelp size={21} strokeWidth={1.2} /></RailButton>
    </Rail>
  );
}

function DesktopBar() {
  return (
    <Taskbar>
      <Weather>
        <svg width="17" height="12" viewBox="0 0 17 12">
          <path d="M4 11a3.5 3.5 0 0 1 0-7 5 5 0 0 1 9 0 3.5 3.5 0 0 1 0 7z" fill="#a9bdea" />
          <path d="M4 11a3 3 0 0 1 1-6 4 4 0 0 1 6 3q2 0 2 3z" fill="#c8d3f3" />
        </svg>
        <div>13°C<br />Cloudy</div>
      </Weather>
      <TaskIcons>
        <Task art="windows" $idle />
        <SearchField>
          <Search size={12} />
          <input placeholder="Search" aria-label="Search" />
          <svg width="27" height="17" viewBox="0 0 27 17">
            <path d="M1 15q8 0 11-6t13-4" stroke="#774436" strokeWidth="1.5" fill="none" />
            <g fill="#efb6a8">
              <circle cx="8" cy="5" r="3.5" /><circle cx="14" cy="6" r="3.5" /><circle cx="20" cy="5" r="3.5" />
              <circle cx="16" cy="11" r="3.5" /><circle cx="23" cy="9" r="3" />
            </g>
            <g fill="#c55c53">
              <circle cx="8" cy="5" r="1" /><circle cx="14" cy="6" r="1" /><circle cx="20" cy="5" r="1" /><circle cx="16" cy="11" r="1" />
            </g>
          </svg>
        </SearchField>
        <Task art="desk" $idle />
        <Task art="copilot" />
        <Task art="folder" $idle />
        <Task art="store" />
        <Task art="edge" $active />
        <Task art="wallet" />
        <Task art="discord" badge="9+" />
        <Task art="telegram" badge="17" />
        <Task art="trader" />
        <Task art="calc" />
        <Task art="obs" dot />
        <Task art="snip" />
        <Task art="gear" />
      </TaskIcons>
      <Clock>15:11<br />24/03/2026</Clock>
    </Taskbar>
  );
}

export default function App() {
  return (
    <Page>
      <GlobalStyle />
      <BrowserChrome />
      <Frame>
        <TopToolbar />
        <Workspace>
          <DrawingTools />
          <CenterColumn>
            <ChartSection />
            <AccountPanel />
          </CenterColumn>
          <WatchlistPanel />
          <RightRail />
        </Workspace>
      </Frame>
      <DesktopBar />
    </Page>
  );
}
